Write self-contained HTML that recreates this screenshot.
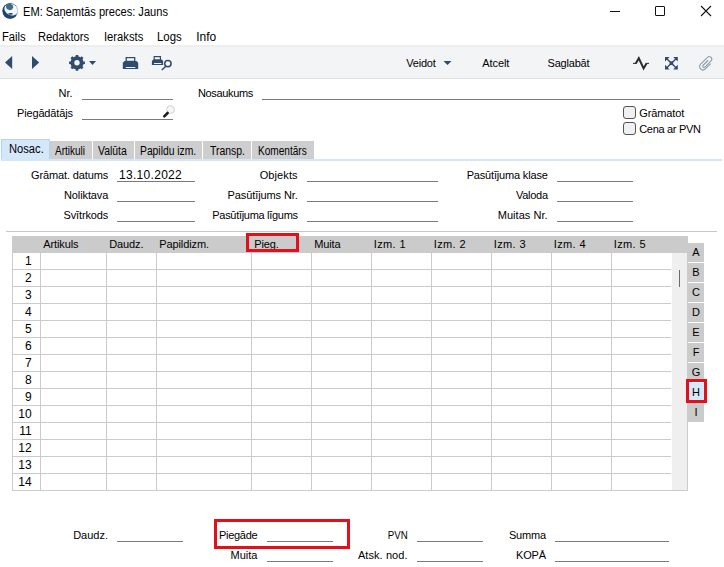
<!DOCTYPE html>
<html><head><meta charset="utf-8"><title>EM</title>
<style>
html,body{margin:0;padding:0;}
body{width:724px;height:567px;position:relative;overflow:hidden;background:#fff;font-family:"Liberation Sans",sans-serif;color:#000;}
.t{position:absolute;white-space:pre;}
.r{position:absolute;}
svg.r{overflow:visible;}
</style></head><body>
<svg class="r" style="left:0px;top:0px" width="22" height="22" viewBox="0 0 22 22">
<defs><clipPath id="cc"><circle cx="10.1" cy="11" r="8"/></clipPath></defs>
<g clip-path="url(#cc)">
<circle cx="10.1" cy="11" r="8" fill="#1f4571"/>
<ellipse cx="11.2" cy="9.6" rx="7" ry="5.6" transform="rotate(25 11.2 9.6)" fill="#f5f7fa"/>
<ellipse cx="9.6" cy="6.8" rx="3.6" ry="3.2" transform="rotate(20 9.6 6.8)" fill="#3e6c88"/>
<ellipse cx="10.6" cy="13.8" rx="2.4" ry="0.9" fill="#1f4571"/>
<path d="M16.5 7 A8 8 0 0 1 17 15" stroke="#c9d3de" stroke-width="1.2" fill="none"/>
</g>
</svg>
<div class="t" style="left:23.40px;top:5.84px;font-size:12px;line-height:12px;color:#000;transform:scaleX(0.925);transform-origin:left top;">EM: Saņemtās preces: Jauns</div>
<div class="r" style="left:610px;top:11px;width:10px;height:1px;background:#111;"></div>
<div class="r" style="left:655px;top:6px;width:10px;height:10px;background:transparent;border:1px solid #111;box-sizing:border-box;border-radius:1px;"></div>
<svg class="r" style="left:700px;top:5px" width="12" height="12" viewBox="0 0 12 12"><path d="M1 1 L11 11 M11 1 L1 11" stroke="#111" stroke-width="1.1"/></svg>
<div class="t" style="left:1.60px;top:30.84px;font-size:12px;line-height:12px;color:#000;transform:scaleX(0.935);transform-origin:left top;">Fails</div>
<div class="t" style="left:38.20px;top:30.84px;font-size:12px;line-height:12px;color:#000;transform:scaleX(0.935);transform-origin:left top;">Redaktors</div>
<div class="t" style="left:104.00px;top:30.84px;font-size:12px;line-height:12px;color:#000;transform:scaleX(0.935);transform-origin:left top;">Ieraksts</div>
<div class="t" style="left:157.00px;top:30.84px;font-size:12px;line-height:12px;color:#000;transform:scaleX(0.95);transform-origin:left top;">Logs</div>
<div class="t" style="left:196.20px;top:30.84px;font-size:12px;line-height:12px;color:#000;transform:scaleX(1.0);transform-origin:left top;">Info</div>
<div class="r" style="left:0px;top:45px;width:724px;height:33px;background:#f3f4f6;"></div>
<div class="r" style="left:0px;top:45px;width:724px;height:2px;background:#eeeeee;"></div>
<div class="r" style="left:0px;top:78px;width:724px;height:1px;background:#e0e1e3;"></div>
<svg class="r" style="left:0;top:45px" width="724" height="32" viewBox="0 45 724 32">
<path d="M5 62.5 L12.2 56 L12.2 69 Z" fill="#2f4b6e"/>
<path d="M39.2 62.5 L32 56 L32 69 Z" fill="#2f4b6e"/>
<path d="M89 61 L96 61 L92.5 65 Z" fill="#2f4b6e"/>
<path d="M443.5 61 L451.5 61 L447.5 65 Z" fill="#2f4b6e"/>
</svg>
<svg class="r" style="left:0;top:45px" width="200" height="32" viewBox="0 45 200 32">
<path d="M82.83 61.40 L84.90 61.55 L84.90 64.05 L82.83 64.20 L82.12 65.93 L83.47 67.50 L81.70 69.27 L80.13 67.92 L78.40 68.63 L78.25 70.70 L75.75 70.70 L75.60 68.63 L73.87 67.92 L72.30 69.27 L70.53 67.50 L71.88 65.93 L71.17 64.20 L69.10 64.05 L69.10 61.55 L71.17 61.40 L71.88 59.67 L70.53 58.10 L72.30 56.33 L73.87 57.68 L75.60 56.97 L75.75 54.90 L78.25 54.90 L78.40 56.97 L80.13 57.68 L81.70 56.33 L83.47 58.10 L82.12 59.67 Z M79.9 62.8 A2.9 2.9 0 1 0 74.1 62.8 A2.9 2.9 0 1 0 79.9 62.8 Z" fill="#2f4b6e" fill-rule="evenodd"/>
<circle cx="77" cy="62.8" r="6.6" fill="#2f4b6e"/>
<circle cx="77" cy="62.8" r="2.7" fill="#f3f4f6"/>
<path d="M126.2 57.6 H134.7 V61.5 H126.2 Z" fill="#fbfbfc" stroke="#2f4b6e" stroke-width="1.3"/>
<path d="M124.6 61 H136.4 L138.2 62.8 V69.1 H122.8 V62.8 Z M125.8 66.9 V68 H135.3 V66.9 Z" fill="#2f4b6e" fill-rule="evenodd"/>
<path d="M154.2 56.6 H160.4 V60 H154.2 Z" fill="#fbfbfc" stroke="#2f4b6e" stroke-width="1.2"/>
<path d="M153.2 59.6 H161.8 L163.1 60.9 V64.9 H151.9 V60.9 Z M154 62.9 V63.9 H161.4 V62.9 Z" fill="#2f4b6e" fill-rule="evenodd"/>
<circle cx="167.9" cy="63.6" r="3.2" fill="#fbfbfc" stroke="#2f4b6e" stroke-width="1.5"/>
<path d="M165.8 66.2 L161.8 70" stroke="#2f4b6e" stroke-width="1.5"/>
</svg>
<div class="t" style="left:406.20px;top:57.69px;font-size:11px;line-height:11px;color:#000;letter-spacing:-0.2px;">Veidot</div>
<div class="t" style="left:482.30px;top:57.69px;font-size:11px;line-height:11px;color:#000;letter-spacing:-0.1px;">Atcelt</div>
<div class="t" style="left:547.50px;top:57.69px;font-size:11px;line-height:11px;color:#000;letter-spacing:-0.2px;">Saglabāt</div>
<svg class="r" style="left:620px;top:45px" width="104" height="32" viewBox="620 45 104 32">
<path d="M633 63.4 H636.2" stroke="#333" stroke-width="1.1"/>
<path d="M646.4 63.4 H649" stroke="#333" stroke-width="1.1"/>
<path d="M635.8 63.6 L638.8 58.2 L643.6 68.4 L646.6 63.2" fill="none" stroke="#2b2b2b" stroke-width="2" stroke-linejoin="miter" stroke-miterlimit="3"/>
<g fill="#2f4b6e">
<rect x="669.6" y="61.4" width="3.6" height="3.6"/>
<path d="M665 57 H669.6 L665 61.6 Z"/>
<path d="M677.8 57 H673.2 L677.8 61.6 Z"/>
<path d="M665 69.4 H669.6 L665 64.8 Z"/>
<path d="M677.8 69.4 H673.2 L677.8 64.8 Z"/>
</g>
<path d="M666 58 L676.8 68.4 M676.8 58 L666 68.4" stroke="#2f4b6e" stroke-width="1.4"/>
<path transform="translate(706.1 63.3) rotate(45) scale(1.2)" d="M2.9 -2.4 V3.8 A2.8 2.8 0 0 1 -2.7 3.8 V-4.3 A2.1 2.1 0 0 1 1.5 -4.3 V2.9 A1.05 1.05 0 0 1 -0.6 2.9 V-3.0" fill="none" stroke="#8d9bad" stroke-width="0.9"/>
</svg>
<div class="t" style="right:651.50px;top:87.69px;font-size:11px;line-height:11px;color:#000;">Nr.</div>
<div class="t" style="right:651.20px;top:107.69px;font-size:11px;line-height:11px;color:#000;letter-spacing:-0.15px;">Piegādātājs</div>
<div class="r" style="left:82px;top:99px;width:91px;height:1px;background:#7a7a7a;"></div>
<div class="r" style="left:82px;top:119px;width:91px;height:1px;background:#7a7a7a;"></div>
<svg class="r" style="left:160px;top:103px" width="18" height="18" viewBox="160 103 18 18">
<circle cx="170.5" cy="109.6" r="3.9" fill="#f6f6f6" stroke="#d0d0d0" stroke-width="1"/>
<path d="M167.6 113 L164.3 116.3" stroke="#1e1e1e" stroke-width="2.6" stroke-linecap="round"/>
</svg>
<div class="t" style="left:198.00px;top:87.69px;font-size:11px;line-height:11px;color:#000;letter-spacing:-0.35px;">Nosaukums</div>
<div class="r" style="left:262px;top:99px;width:418px;height:1px;background:#7a7a7a;"></div>
<div class="r" style="left:623px;top:106px;width:13px;height:13px;background:#f0f0f0;border:1px solid #555;box-sizing:border-box;border-radius:3px;"></div>
<div class="t" style="left:639.20px;top:107.69px;font-size:11px;line-height:11px;color:#000;letter-spacing:-0.1px;">Grāmatot</div>
<div class="r" style="left:623px;top:122px;width:13px;height:13px;background:#f0f0f0;border:1px solid #555;box-sizing:border-box;border-radius:3px;"></div>
<div class="t" style="left:639.20px;top:123.69px;font-size:11px;line-height:11px;color:#000;letter-spacing:-0.3px;">Cena ar PVN</div>
<div class="r" style="left:1px;top:159px;width:721px;height:2px;background:#d3e6fa;"></div>
<div class="r" style="left:1px;top:139px;width:49px;height:20px;background:#d4e7fb;border:1px solid #b0d4f4;border-bottom:none;box-sizing:border-box;"></div>
<div class="t" style="left:9.20px;top:142.84px;font-size:12px;line-height:12px;color:#000;transform:scaleX(0.93);transform-origin:left top;">Nosac.</div>
<div class="r" style="left:50px;top:141px;width:42px;height:18px;background:#cecece;"></div>
<div class="r" style="left:93px;top:141px;width:41px;height:18px;background:#cecece;"></div>
<div class="r" style="left:135px;top:141px;width:67px;height:18px;background:#cecece;"></div>
<div class="r" style="left:203px;top:141px;width:48px;height:18px;background:#cecece;"></div>
<div class="r" style="left:252px;top:141px;width:62px;height:18px;background:#cecece;"></div>
<div class="t" style="left:55.20px;top:144.84px;font-size:12px;line-height:12px;color:#000;transform:scaleX(0.83);transform-origin:left top;">Artikuli</div>
<div class="t" style="left:97.80px;top:144.84px;font-size:12px;line-height:12px;color:#000;transform:scaleX(0.87);transform-origin:left top;">Valūta</div>
<div class="t" style="left:140.20px;top:144.84px;font-size:12px;line-height:12px;color:#000;transform:scaleX(0.86);transform-origin:left top;">Papildu izm.</div>
<div class="t" style="left:209.80px;top:144.84px;font-size:12px;line-height:12px;color:#000;transform:scaleX(0.87);transform-origin:left top;">Transp.</div>
<div class="t" style="left:258.20px;top:144.84px;font-size:12px;line-height:12px;color:#000;transform:scaleX(0.84);transform-origin:left top;">Komentārs</div>
<div class="t" style="right:615.80px;top:169.69px;font-size:11px;line-height:11px;color:#000;letter-spacing:-0.12px;">Grāmat. datums</div>
<div class="t" style="right:426.30px;top:169.69px;font-size:11px;line-height:11px;color:#000;letter-spacing:0.1px;">Objekts</div>
<div class="t" style="right:176.30px;top:169.69px;font-size:11px;line-height:11px;color:#000;letter-spacing:-0.17px;">Pasūtījuma klase</div>
<div class="r" style="left:117px;top:181px;width:78px;height:1px;background:#7a7a7a;"></div>
<div class="r" style="left:307px;top:181px;width:131px;height:1px;background:#7a7a7a;"></div>
<div class="r" style="left:557px;top:181px;width:76px;height:1px;background:#7a7a7a;"></div>
<div class="t" style="right:615.80px;top:189.69px;font-size:11px;line-height:11px;color:#000;letter-spacing:-0.12px;">Noliktava</div>
<div class="t" style="right:426.30px;top:189.69px;font-size:11px;line-height:11px;color:#000;letter-spacing:-0.1px;">Pasūtījums Nr.</div>
<div class="t" style="right:176.30px;top:189.69px;font-size:11px;line-height:11px;color:#000;letter-spacing:-0.3px;">Valoda</div>
<div class="r" style="left:117px;top:201px;width:78px;height:1px;background:#7a7a7a;"></div>
<div class="r" style="left:307px;top:201px;width:131px;height:1px;background:#7a7a7a;"></div>
<div class="r" style="left:557px;top:201px;width:76px;height:1px;background:#7a7a7a;"></div>
<div class="t" style="right:615.80px;top:209.69px;font-size:11px;line-height:11px;color:#000;letter-spacing:-0.12px;">Svītrkods</div>
<div class="t" style="right:426.30px;top:209.69px;font-size:11px;line-height:11px;color:#000;letter-spacing:-0.3px;">Pasūtījuma līgums</div>
<div class="t" style="right:176.30px;top:209.69px;font-size:11px;line-height:11px;color:#000;letter-spacing:0.05px;">Muitas Nr.</div>
<div class="r" style="left:117px;top:221px;width:78px;height:1px;background:#7a7a7a;"></div>
<div class="r" style="left:307px;top:221px;width:131px;height:1px;background:#7a7a7a;"></div>
<div class="r" style="left:557px;top:221px;width:76px;height:1px;background:#7a7a7a;"></div>
<div class="t" style="left:119.00px;top:169.04px;font-size:12px;line-height:12px;color:#000;letter-spacing:0.3px;">13.10.2022</div>
<div class="r" style="left:6px;top:231px;width:711px;height:1px;background:#c8c8c8;"></div>
<div class="r" style="left:12px;top:236px;width:676px;height:17px;background:#cbcbcb;"></div>
<div class="r" style="left:672px;top:253px;width:15px;height:237px;background:#efefef;"></div>
<div class="r" style="left:12px;top:269px;width:659px;height:1px;background:#cbcbcb;"></div>
<div class="r" style="left:12px;top:286px;width:659px;height:1px;background:#cbcbcb;"></div>
<div class="r" style="left:12px;top:303px;width:659px;height:1px;background:#cbcbcb;"></div>
<div class="r" style="left:12px;top:320px;width:659px;height:1px;background:#cbcbcb;"></div>
<div class="r" style="left:12px;top:337px;width:659px;height:1px;background:#cbcbcb;"></div>
<div class="r" style="left:12px;top:354px;width:659px;height:1px;background:#cbcbcb;"></div>
<div class="r" style="left:12px;top:371px;width:659px;height:1px;background:#cbcbcb;"></div>
<div class="r" style="left:12px;top:388px;width:659px;height:1px;background:#cbcbcb;"></div>
<div class="r" style="left:12px;top:405px;width:659px;height:1px;background:#cbcbcb;"></div>
<div class="r" style="left:12px;top:422px;width:659px;height:1px;background:#cbcbcb;"></div>
<div class="r" style="left:12px;top:439px;width:659px;height:1px;background:#cbcbcb;"></div>
<div class="r" style="left:12px;top:456px;width:659px;height:1px;background:#cbcbcb;"></div>
<div class="r" style="left:12px;top:473px;width:659px;height:1px;background:#cbcbcb;"></div>
<div class="r" style="left:12px;top:490px;width:659px;height:1px;background:#cbcbcb;"></div>
<div class="r" style="left:12px;top:490px;width:676px;height:1px;background:#cbcbcb;"></div>
<div class="r" style="left:12px;top:253px;width:1px;height:237px;background:#cbcbcb;"></div>
<div class="r" style="left:687px;top:253px;width:1px;height:237px;background:#cbcbcb;"></div>
<div class="r" style="left:40px;top:253px;width:1px;height:237px;background:#cbcbcb;"></div>
<div class="r" style="left:106px;top:253px;width:1px;height:237px;background:#cbcbcb;"></div>
<div class="r" style="left:156px;top:253px;width:1px;height:237px;background:#cbcbcb;"></div>
<div class="r" style="left:251px;top:253px;width:1px;height:237px;background:#cbcbcb;"></div>
<div class="r" style="left:311px;top:253px;width:1px;height:237px;background:#cbcbcb;"></div>
<div class="r" style="left:371px;top:253px;width:1px;height:237px;background:#cbcbcb;"></div>
<div class="r" style="left:431px;top:253px;width:1px;height:237px;background:#cbcbcb;"></div>
<div class="r" style="left:491px;top:253px;width:1px;height:237px;background:#cbcbcb;"></div>
<div class="r" style="left:551px;top:253px;width:1px;height:237px;background:#cbcbcb;"></div>
<div class="r" style="left:611px;top:253px;width:1px;height:237px;background:#cbcbcb;"></div>
<div class="r" style="left:679px;top:270px;width:1px;height:17px;background:#6a6a6a;"></div>
<div class="t" style="left:43.20px;top:238.69px;font-size:11px;line-height:11px;color:#000;letter-spacing:-0.1px;">Artikuls</div>
<div class="t" style="left:109.20px;top:238.69px;font-size:11px;line-height:11px;color:#000;letter-spacing:-0.1px;">Daudz.</div>
<div class="t" style="left:159.20px;top:238.69px;font-size:11px;line-height:11px;color:#000;letter-spacing:-0.1px;">Papildizm.</div>
<div class="t" style="left:254.20px;top:238.69px;font-size:11px;line-height:11px;color:#000;letter-spacing:-0.1px;">Pieg.</div>
<div class="t" style="left:314.20px;top:238.69px;font-size:11px;line-height:11px;color:#000;letter-spacing:-0.1px;">Muita</div>
<div class="t" style="left:373.80px;top:238.69px;font-size:11px;line-height:11px;color:#000;letter-spacing:0.35px;">Izm. 1</div>
<div class="t" style="left:433.80px;top:238.69px;font-size:11px;line-height:11px;color:#000;letter-spacing:0.35px;">Izm. 2</div>
<div class="t" style="left:493.80px;top:238.69px;font-size:11px;line-height:11px;color:#000;letter-spacing:0.35px;">Izm. 3</div>
<div class="t" style="left:553.80px;top:238.69px;font-size:11px;line-height:11px;color:#000;letter-spacing:0.35px;">Izm. 4</div>
<div class="t" style="left:613.80px;top:238.69px;font-size:11px;line-height:11px;color:#000;letter-spacing:0.35px;">Izm. 5</div>
<div class="t" style="right:692.30px;top:254.94px;font-size:12px;line-height:12px;color:#000;">1</div>
<div class="t" style="right:692.30px;top:271.94px;font-size:12px;line-height:12px;color:#000;">2</div>
<div class="t" style="right:692.30px;top:288.94px;font-size:12px;line-height:12px;color:#000;">3</div>
<div class="t" style="right:692.30px;top:305.94px;font-size:12px;line-height:12px;color:#000;">4</div>
<div class="t" style="right:692.30px;top:322.94px;font-size:12px;line-height:12px;color:#000;">5</div>
<div class="t" style="right:692.30px;top:339.94px;font-size:12px;line-height:12px;color:#000;">6</div>
<div class="t" style="right:692.30px;top:356.94px;font-size:12px;line-height:12px;color:#000;">7</div>
<div class="t" style="right:692.30px;top:373.94px;font-size:12px;line-height:12px;color:#000;">8</div>
<div class="t" style="right:692.30px;top:390.94px;font-size:12px;line-height:12px;color:#000;">9</div>
<div class="t" style="right:692.30px;top:407.94px;font-size:12px;line-height:12px;color:#000;">10</div>
<div class="t" style="right:692.30px;top:424.94px;font-size:12px;line-height:12px;color:#000;">11</div>
<div class="t" style="right:692.30px;top:441.94px;font-size:12px;line-height:12px;color:#000;">12</div>
<div class="t" style="right:692.30px;top:458.94px;font-size:12px;line-height:12px;color:#000;">13</div>
<div class="t" style="right:692.30px;top:475.94px;font-size:12px;line-height:12px;color:#000;">14</div>
<div class="r" style="left:688px;top:243px;width:16px;height:19px;background:#cbcbcb;"></div>
<div class="t" style="left:688px;top:243px;width:16px;height:19px;line-height:19px;text-align:center;font-size:11px;">A</div>
<div class="r" style="left:688px;top:263px;width:16px;height:19px;background:#cbcbcb;"></div>
<div class="t" style="left:688px;top:263px;width:16px;height:19px;line-height:19px;text-align:center;font-size:11px;">B</div>
<div class="r" style="left:688px;top:283px;width:16px;height:19px;background:#cbcbcb;"></div>
<div class="t" style="left:688px;top:283px;width:16px;height:19px;line-height:19px;text-align:center;font-size:11px;">C</div>
<div class="r" style="left:688px;top:303px;width:16px;height:19px;background:#cbcbcb;"></div>
<div class="t" style="left:688px;top:303px;width:16px;height:19px;line-height:19px;text-align:center;font-size:11px;">D</div>
<div class="r" style="left:688px;top:323px;width:16px;height:19px;background:#cbcbcb;"></div>
<div class="t" style="left:688px;top:323px;width:16px;height:19px;line-height:19px;text-align:center;font-size:11px;">E</div>
<div class="r" style="left:688px;top:343px;width:16px;height:19px;background:#cbcbcb;"></div>
<div class="t" style="left:688px;top:343px;width:16px;height:19px;line-height:19px;text-align:center;font-size:11px;">F</div>
<div class="r" style="left:688px;top:363px;width:16px;height:19px;background:#cbcbcb;"></div>
<div class="t" style="left:688px;top:363px;width:16px;height:19px;line-height:19px;text-align:center;font-size:11px;">G</div>
<div class="r" style="left:688px;top:383px;width:16px;height:19px;background:#d6e8fa;"></div>
<div class="t" style="left:688px;top:383px;width:16px;height:19px;line-height:19px;text-align:center;font-size:11px;">H</div>
<div class="r" style="left:688px;top:403px;width:16px;height:19px;background:#cbcbcb;"></div>
<div class="t" style="left:688px;top:403px;width:16px;height:19px;line-height:19px;text-align:center;font-size:11px;">I</div>
<div class="t" style="right:616.00px;top:529.69px;font-size:11px;line-height:11px;color:#000;">Daudz.</div>
<div class="r" style="left:117px;top:541px;width:66px;height:1px;background:#7a7a7a;"></div>
<div class="t" style="left:219.00px;top:529.69px;font-size:11px;line-height:11px;color:#000;letter-spacing:-0.3px;">Piegāde</div>
<div class="t" style="right:466.60px;top:549.69px;font-size:11px;line-height:11px;color:#000;">Muita</div>
<div class="r" style="left:267px;top:541px;width:66px;height:1px;background:#7a7a7a;"></div>
<div class="r" style="left:267px;top:561px;width:66px;height:1px;background:#7a7a7a;"></div>
<div class="t" style="right:316.40px;top:529.69px;font-size:11px;line-height:11px;color:#000;transform:scaleX(0.88);transform-origin:right top;">PVN</div>
<div class="t" style="right:316.40px;top:549.69px;font-size:11px;line-height:11px;color:#000;letter-spacing:0.08px;">Atsk. nod.</div>
<div class="r" style="left:417px;top:541px;width:66px;height:1px;background:#7a7a7a;"></div>
<div class="r" style="left:417px;top:561px;width:66px;height:1px;background:#7a7a7a;"></div>
<div class="t" style="right:178.20px;top:529.69px;font-size:11px;line-height:11px;color:#000;letter-spacing:-0.2px;">Summa</div>
<div class="t" style="right:178.20px;top:549.69px;font-size:11px;line-height:11px;color:#000;letter-spacing:-0.2px;">KOPĀ</div>
<div class="r" style="left:555px;top:541px;width:114px;height:1px;background:#7a7a7a;"></div>
<div class="r" style="left:555px;top:561px;width:114px;height:1px;background:#7a7a7a;"></div>
<div class="r" style="left:246px;top:233px;width:53px;height:19px;background:transparent;border:3px solid #e3101b;box-sizing:border-box;"></div>
<div class="r" style="left:686px;top:379px;width:21px;height:24px;background:transparent;border:3px solid #e3101b;box-sizing:border-box;"></div>
<div class="r" style="left:214px;top:519px;width:136px;height:30px;background:transparent;border:3px solid #e3101b;box-sizing:border-box;"></div>
</body></html>
